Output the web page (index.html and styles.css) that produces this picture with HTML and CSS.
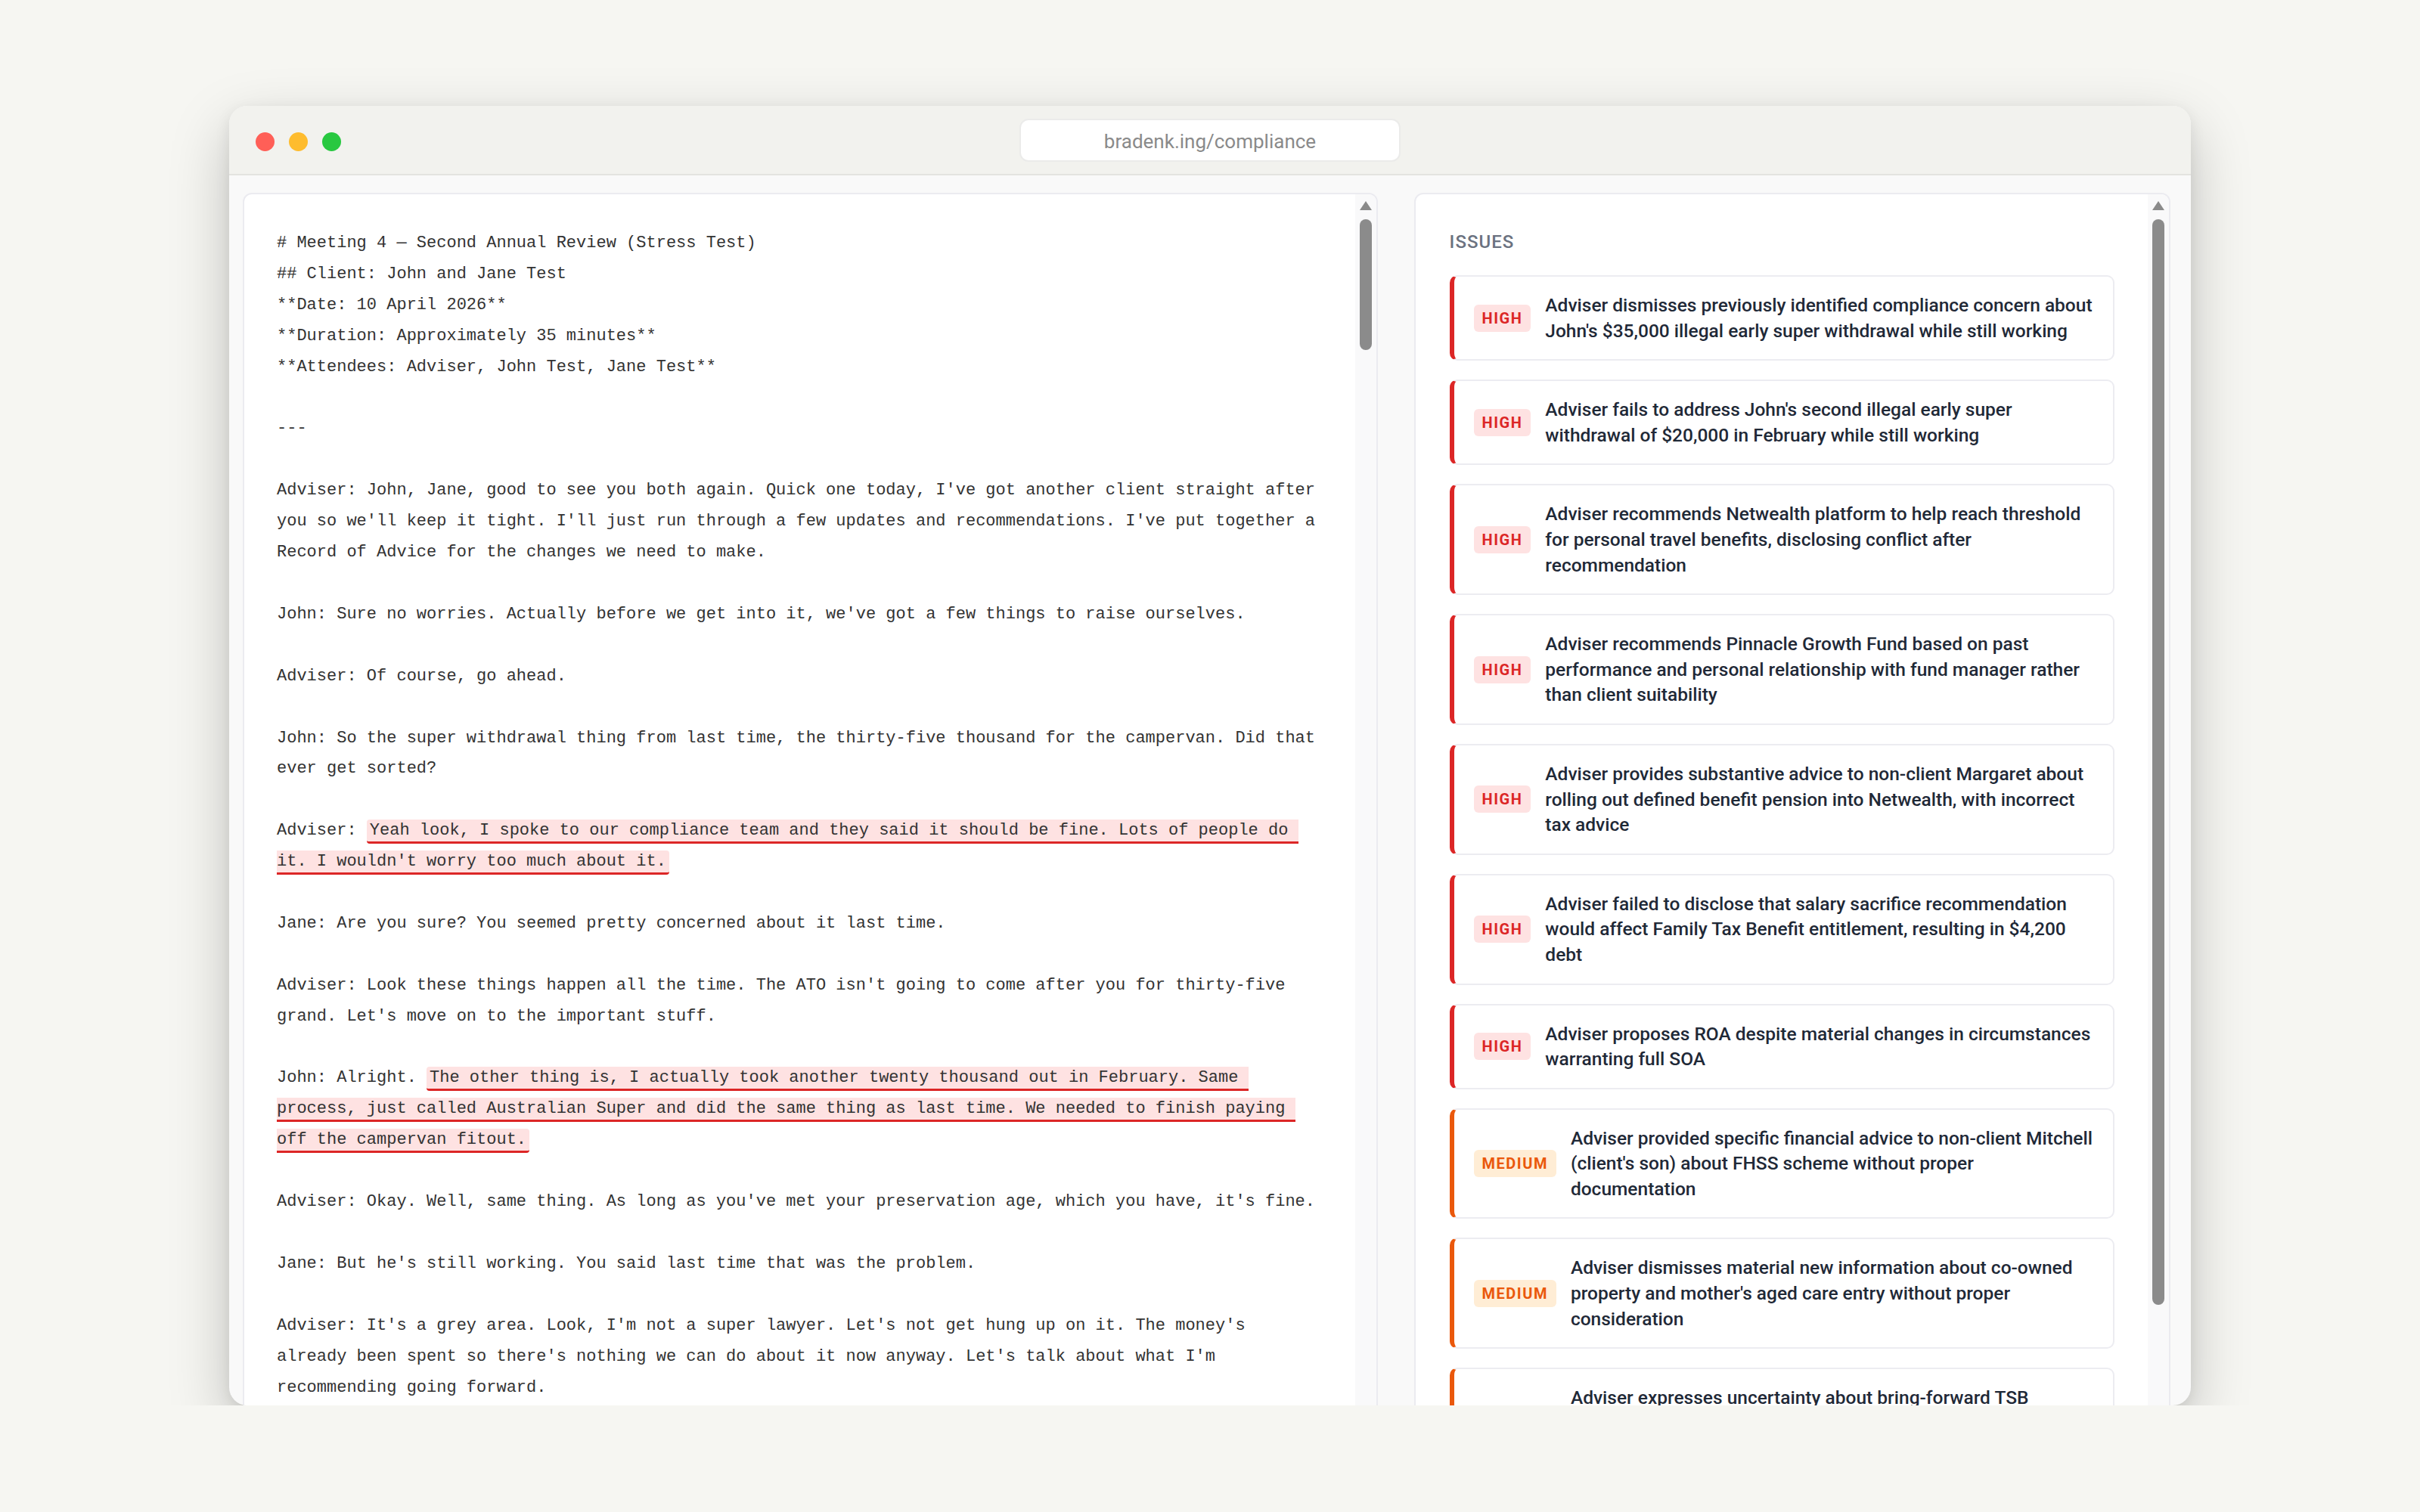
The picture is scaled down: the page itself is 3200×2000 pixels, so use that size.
FILE: index.html
```html
<!DOCTYPE html>
<html lang="en">
<head>
    <meta charset="UTF-8">
    <meta name="viewport" content="width=device-width, initial-scale=1.0">
    <title>Compliance review</title>
    <link rel="stylesheet" href="styles.css">
</head>
<body>
    <div class="window">
        <div class="titlebar">
            <div class="lights">
                <span class="light red"></span>
                <span class="light yellow"></span>
                <span class="light green"></span>
            </div>
            <div class="url">bradenk.ing/compliance</div>
            <div></div>
        </div>

        <div class="main">
            <!-- transcript -->
            <div class="panel">
<pre class="transcript"># Meeting 4 — Second Annual Review (Stress Test)
## Client: John and Jane Test
**Date: 10 April 2026**
**Duration: Approximately 35 minutes**
**Attendees: Adviser, John Test, Jane Test**

---

Adviser: John, Jane, good to see you both again. Quick one today, I've got another client straight after you so we'll keep it tight. I'll just run through a few updates and recommendations. I've put together a Record of Advice for the changes we need to make.

John: Sure no worries. Actually before we get into it, we've got a few things to raise ourselves.

Adviser: Of course, go ahead.

John: So the super withdrawal thing from last time, the thirty-five thousand for the campervan. Did that ever get sorted?

Adviser: <mark class="flag">Yeah look, I spoke to our compliance team and they said it should be fine. Lots of people do it. I wouldn't worry too much about it.</mark>

Jane: Are you sure? You seemed pretty concerned about it last time.

Adviser: Look these things happen all the time. The ATO isn't going to come after you for thirty-five grand. Let's move on to the important stuff.

John: Alright. <mark class="flag">The other thing is, I actually took another twenty thousand out in February. Same process, just called Australian Super and did the same thing as last time. We needed to finish paying off the campervan fitout.</mark>

Adviser: Okay. Well, same thing. As long as you've met your preservation age, which you have, it's fine.

Jane: But he's still working. You said last time that was the problem.

Adviser: It's a grey area. Look, I'm not a super lawyer. Let's not get hung up on it. The money's already been spent so there's nothing we can do about it now anyway. Let's talk about what I'm recommending going forward.
</pre>
                <div class="rail"><span class="arrow"></span><span class="thumb thumb-short"></span></div>
            </div>

            <!-- issues -->
            <div class="panel">
                <div class="issues">
                    <h3>Issues</h3>
                    <div class="issue high">
                        <span class="badge">High</span>
                        <p>Adviser dismisses previously identified compliance concern about John's $35,000 illegal early super withdrawal while still working</p>
                    </div>
                    <div class="issue high">
                        <span class="badge">High</span>
                        <p>Adviser fails to address John's second illegal early super withdrawal of $20,000 in February while still working</p>
                    </div>
                    <div class="issue high">
                        <span class="badge">High</span>
                        <p>Adviser recommends Netwealth platform to help reach threshold for personal travel benefits, disclosing conflict after recommendation</p>
                    </div>
                    <div class="issue high">
                        <span class="badge">High</span>
                        <p>Adviser recommends Pinnacle Growth Fund based on past performance and personal relationship with fund manager rather than client suitability</p>
                    </div>
                    <div class="issue high">
                        <span class="badge">High</span>
                        <p>Adviser provides substantive advice to non-client Margaret about rolling out defined benefit pension into Netwealth, with incorrect tax advice</p>
                    </div>
                    <div class="issue high">
                        <span class="badge">High</span>
                        <p>Adviser failed to disclose that salary sacrifice recommendation would affect Family Tax Benefit entitlement, resulting in $4,200 debt</p>
                    </div>
                    <div class="issue high">
                        <span class="badge">High</span>
                        <p>Adviser proposes ROA despite material changes in circumstances warranting full SOA</p>
                    </div>
                    <div class="issue medium">
                        <span class="badge">Medium</span>
                        <p>Adviser provided specific financial advice to non-client Mitchell (client's son) about FHSS scheme without proper documentation</p>
                    </div>
                    <div class="issue medium">
                        <span class="badge">Medium</span>
                        <p>Adviser dismisses material new information about co-owned property and mother's aged care entry without proper consideration</p>
                    </div>
                    <div class="issue medium">
                        <span class="badge">Medium</span>
                        <p>Adviser expresses uncertainty about bring-forward TSB thresholds and contribution caps, leaving the clients without a clear strategy for their non-concessional contributions</p>
                    </div>
                </div>
                <div class="rail"><span class="arrow"></span><span class="thumb thumb-long"></span></div>
            </div>
        </div>
    </div>
</body>
</html>
```

FILE: styles.css
```css
body {
    margin: 0;
    background: #f6f6f2;
    font-family: Roboto, "Open Sans", sans-serif;
}
.window {
    display: flex;
    flex-direction: column;
    width: 2594px;
    height: 1719px;
    margin: 140px auto 0;
    border-radius: 24px;
    overflow: hidden;
    background: #f9f9f9;
    box-shadow: 0 30px 80px rgba(0, 0, 0, 0.22), 0 6px 20px rgba(0, 0, 0, 0.08);
}

/* title bar */
.titlebar {
    flex: none;
    display: grid;
    grid-template-columns: 1fr 504px 1fr;
    align-items: center;
    height: 90px;
    background: #f2f2ee;
    border-bottom: 2px solid #e3e3e0;
}
.lights {
    display: flex;
    gap: 19px;
    margin-top: 4px;
    padding-left: 35px;
}
.light {
    width: 25px;
    height: 25px;
    border-radius: 50%;
}
.red { background: #ff5f57; }
.yellow { background: #febc2e; }
.green { background: #28c840; }
.url {
    box-sizing: border-box;
    height: 57px;
    line-height: 57px;
    border: 2px solid #ebebea;
    border-radius: 12px;
    background: #fff;
    color: #8a8a8a;
    font-size: 26px;
    text-align: center;
}

/* panels */
.main {
    flex: 1;
    display: grid;
    grid-template-columns: 3fr 2fr;
    align-items: start;
    gap: 48px;
    padding: 23px 27px 0 18px;
}
.panel {
    display: flex;
    border: 2px solid #ebebf0;
    border-radius: 12px;
    background: #fff;
    overflow: hidden;
}
.rail {
    flex: none;
    display: flex;
    flex-direction: column;
    align-items: center;
    width: 28px;
    background: #f9f9fa;
}
.arrow {
    width: 0;
    height: 0;
    margin-top: 9px;
    border-left: 8px solid transparent;
    border-right: 8px solid transparent;
    border-bottom: 12px solid #8a8a8a;
}
.thumb {
    width: 16px;
    margin-top: 12px;
    border-radius: 8px;
    background: #8b8b8b;
}
.thumb-short { height: 173px; }
.thumb-long { height: 1436px; }

/* transcript */
.transcript {
    flex: 1;
    margin: 0;
    padding: 45px 45px 44px 43px;
    white-space: pre-wrap;
    font-family: "Liberation Mono", "DejaVu Sans Mono", monospace;
    font-size: 22px;
    line-height: 40.9px;
    color: #333;
}
.flag {
    padding: 2px 4px;
    border-bottom: 3px solid #dc2626;
    border-radius: 4px;
    background: #fee2e2;
    color: inherit;
}

/* issues */
.issues {
    flex: 1;
    padding: 45px 44px 44px 45px;
}
.issues h3 {
    margin: 0 0 26px;
    font-size: 24px;
    line-height: 36px;
    font-weight: 500;
    letter-spacing: 1px;
    text-transform: uppercase;
    color: #6b7280;
}
.issue {
    display: flex;
    align-items: center;
    gap: 19px;
    margin-bottom: 25px;
    padding: 21px 22px 21px 26px;
    border: 2px solid #ececf1;
    border-left: 6px solid #dc2626;
    border-radius: 10px;
}
.issue.medium {
    border-left-color: #ea580c;
}
.issue p {
    margin: 0;
    font-size: 24.5px;
    line-height: 33.6px;
    font-weight: 500;
    color: #1f2937;
}
.badge {
    flex: none;
    height: 36px;
    padding: 0 11px;
    border-radius: 6px;
    line-height: 36px;
    font-size: 20px;
    font-weight: 700;
    letter-spacing: 1.5px;
    text-transform: uppercase;
}
.high .badge {
    background: #fee2e2;
    color: #dc2626;
}
.medium .badge {
    background: #ffedd5;
    color: #ea580c;
}
```
